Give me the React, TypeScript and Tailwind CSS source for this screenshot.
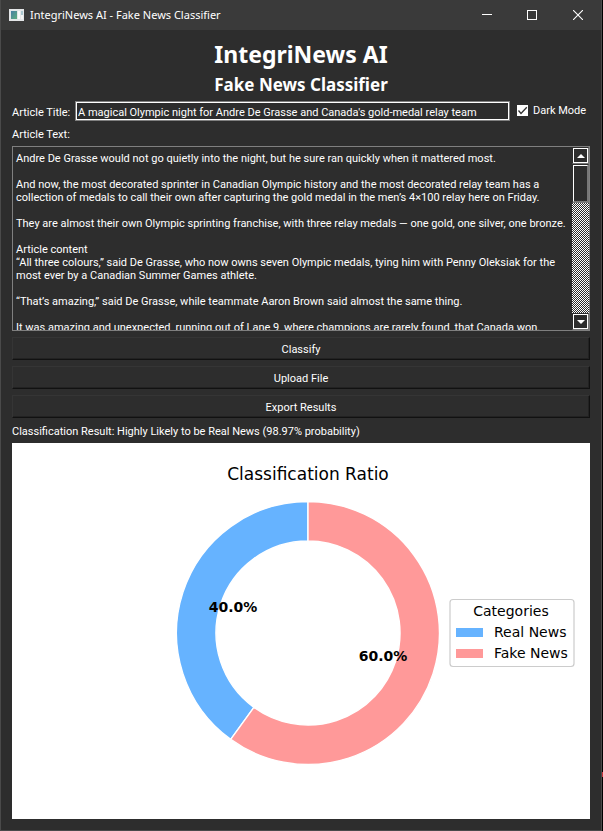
import { useState } from 'react';

const ARTICLE = `Andre De Grasse would not go quietly into the night, but he sure ran quickly when it mattered most.

And now, the most decorated sprinter in Canadian Olympic history and the most decorated relay team has a
collection of medals to call their own after capturing the gold medal in the men’s 4×100 relay here on Friday.

They are almost their own Olympic sprinting franchise, with three relay medals — one gold, one silver, one bronze.

Article content
“All three colours,” said De Grasse, who now owns seven Olympic medals, tying him with Penny Oleksiak for the
most ever by a Canadian Summer Games athlete.

“That’s amazing,” said De Grasse, while teammate Aaron Brown said almost the same thing.

It was amazing and unexpected, running out of Lane 9, where champions are rarely found, that Canada won.`;

function TitleBar() {
  return (
    <header className="flex h-[30px] items-center bg-[#3a3a3a]">
      <svg className="ml-2 h-3 w-[15px]" viewBox="0 0 15 12" aria-hidden="true">
        <defs>
          <linearGradient id="app-pane" x1="0" y1="0" x2="1" y2="1">
            <stop offset="0" stopColor="#4a7fa5" />
            <stop offset="1" stopColor="#5fae7e" />
          </linearGradient>
        </defs>
        <rect width="15" height="12" fill="#e4e6e8" />
        <rect x="2" y="2" width="6" height="8" fill="url(#app-pane)" />
        <rect x="9" y="2" width="2" height="8" fill="#fafafa" />
        <rect x="12" y="2" width="2" height="4" fill="#a9c6cf" />
        <rect x="12" y="6" width="2" height="4" fill="#f4f4f4" />
      </svg>
      <h1 className="ml-[6px] flex-1 font-['Noto_Sans',sans-serif] text-[11px] leading-4">
        IntegriNews AI - Fake News Classifier
      </h1>
      <button aria-label="Minimize" className="flex h-full w-[45px] items-center justify-center">
        <svg width="10" height="10" viewBox="0 0 10 10" shapeRendering="crispEdges">
          <rect y="4" width="10" height="1" fill="#fff" />
        </svg>
      </button>
      <button aria-label="Maximize" className="flex h-full w-[45px] items-center justify-center">
        <svg width="10" height="10" viewBox="0 0 10 10">
          <rect x=".5" y=".5" width="9" height="9" fill="none" stroke="#fff" />
        </svg>
      </button>
      <button aria-label="Close" className="flex h-full w-[47px] items-center justify-center">
        <svg width="10" height="10" viewBox="0 0 10 10">
          <path d="M0 0L10 10M10 0L0 10" stroke="#fff" strokeWidth="1.1" />
        </svg>
      </button>
    </header>
  );
}

function ScrollButton({ label, points }: { label: string; points: string }) {
  return (
    <button
      aria-label={label}
      className="flex h-[17px] items-center justify-center border border-[#2d2d2d] border-r-[#777] border-b-[#777] bg-[#2d2d2d]"
    >
      <span className="flex h-full w-full items-center justify-center border border-white">
        <svg width="8" height="4" viewBox="0 0 8 4" aria-hidden="true">
          <polygon points={points} fill="#fff" />
        </svg>
      </span>
    </button>
  );
}

function PushButton({ children }: { children: string }) {
  return (
    <button className="h-[23px] border border-t-[#353535] border-r-[#111] border-b-[#111] border-l-[#353535] pt-[2px] text-center shadow-[inset_-1px_-1px_0_#222]">
      {children}
    </button>
  );
}

function RatioChart() {
  return (
    <svg
      viewBox="0 0 578 376"
      className="block w-full bg-white font-['DejaVu_Sans',sans-serif]"
      role="img"
      aria-label="Classification Ratio"
    >
      <text x="296" y="37" fontSize="17" textAnchor="middle">Classification Ratio</text>
      <g stroke="#fff" strokeWidth="1.4" strokeLinejoin="round">
        <path d="M296 58.500A131.500 131.500 0 0 0 218.700 296.400L241.900 264.400A92 92 0 0 1 296 98Z" fill="#66b3ff" />
        <path d="M296 58.500A131.500 131.500 0 1 1 218.700 296.400L241.900 264.400A92 92 0 1 0 296 98Z" fill="#ff9999" />
      </g>
      <g fontSize="14" fontWeight="700" textAnchor="middle">
        <text x="221" y="169">40.0%</text>
        <text x="371" y="218">60.0%</text>
      </g>
      <rect x="438" y="156.500" width="124" height="67" rx="3" fill="#fff" stroke="#ccc" strokeWidth="1.2" />
      <g fontSize="14">
        <text x="499" y="173" textAnchor="middle">Categories</text>
        <text x="482" y="194">Real News</text>
        <text x="482" y="215">Fake News</text>
      </g>
      <rect x="444" y="185" width="27" height="9" fill="#66b3ff" />
      <rect x="444" y="206" width="27" height="9" fill="#ff9999" />
    </svg>
  );
}

export default function App() {
  const [title, setTitle] = useState("A magical Olympic night for Andre De Grasse and Canada's gold-medal relay team");
  const [article, setArticle] = useState(ARTICLE);
  const [dark, setDark] = useState(true);

  return (
    <div className="relative min-h-screen bg-black pr-px font-['Roboto',sans-serif] text-[11px] leading-[13px] text-white">
      <span className="absolute right-0 bottom-[54px] h-[5px] w-px bg-[#c8323c]" aria-hidden="true" />
      <div className="min-h-screen border border-t-0 border-[#4a4a4a] bg-[#2d2d2d]">
        <TitleBar />
        <main className="flex flex-col gap-[6px] p-[11px]">
          <h2 className="text-center font-['Noto_Sans',sans-serif] text-[23px] leading-[27px] font-bold">
            IntegriNews AI
          </h2>
          <h3 className="text-center font-['Noto_Sans',sans-serif] text-[17px] leading-[21px] font-bold">
            Fake News Classifier
          </h3>
          <div className="flex h-5 items-center">
            <label htmlFor="title" className="w-[63px] pt-[2px]">Article Title:</label>
            <input
              id="title"
              value={title}
              onChange={(e) => setTitle(e.target.value)}
              className="h-5 min-w-0 flex-1 border border-[#7f7f7f] bg-[#2d2d2d] px-[2px] pt-[2px] shadow-[inset_0_0_0_1px_#fff] outline-none"
            />
            <label className="ml-[7px] flex h-[19px] w-[73px] items-center gap-[5px] self-start">
              <input
                type="checkbox"
                checked={dark}
                onChange={(e) => setDark(e.target.checked)}
                className="peer sr-only"
              />
              <svg className="h-[11px] w-[11px] bg-white peer-checked:[&>path]:opacity-100 [&>path]:opacity-0" viewBox="0 0 11 11" aria-hidden="true">
                <path d="M1.500 5.500L4 8.500L9.800 2.200" fill="none" stroke="#333" strokeWidth="1.300" />
              </svg>
              Dark Mode
            </label>
          </div>
          <label htmlFor="article" className="h-[13px] leading-[15px]">Article Text:</label>
          <div className="flex h-[185px] border border-[#7f7f7f]">
            <textarea
              id="article"
              value={article}
              onChange={(e) => setArticle(e.target.value)}
              className="min-w-0 flex-1 resize-none overflow-hidden bg-transparent pt-[5px] pl-[3px] outline-none"
            />
            <div className="flex w-[17px] flex-col bg-[conic-gradient(#fff_25%,#2d2d2d_0_50%,#fff_0_75%,#2d2d2d_0)] bg-[length:2px_2px]">
              <ScrollButton label="Scroll up" points="4,0 8,4 0,4" />
              <div className="flex h-[39px] border border-[#2d2d2d] border-r-[#777] border-b-[#777] bg-[#2d2d2d]">
                <div className="flex-1 border border-white border-r-[#777] border-b-[#777]" />
              </div>
              <div className="flex-1" />
              <ScrollButton label="Scroll down" points="0,0 8,0 4,4" />
            </div>
          </div>
          <PushButton>Classify</PushButton>
          <PushButton>Upload File</PushButton>
          <PushButton>Export Results</PushButton>
          <p className="h-[13px] leading-[15px]">
            Classification Result: Highly Likely to be Real News (98.97% probability)
          </p>
          <RatioChart />
        </main>
      </div>
    </div>
  );
}
